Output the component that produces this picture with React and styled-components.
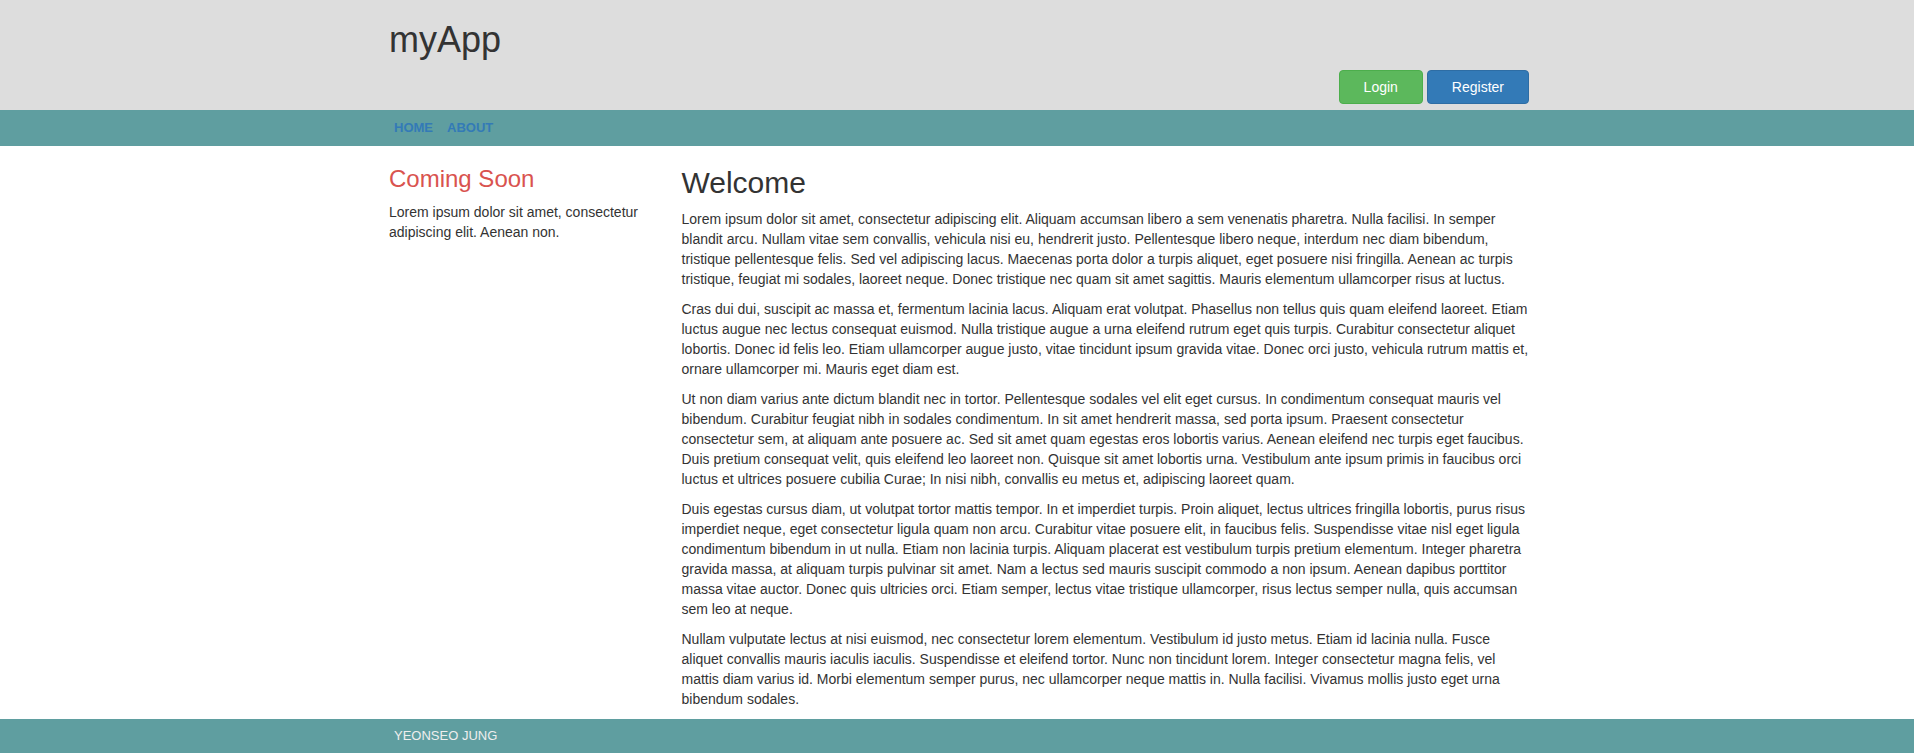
import React from "react";
import styled, { createGlobalStyle } from "styled-components";

const paragraphs = [
  "Lorem ipsum dolor sit amet, consectetur adipiscing elit. Aliquam accumsan libero a sem venenatis pharetra. Nulla facilisi. In semper blandit arcu. Nullam vitae sem convallis, vehicula nisi eu, hendrerit justo. Pellentesque libero neque, interdum nec diam bibendum, tristique pellentesque felis. Sed vel adipiscing lacus. Maecenas porta dolor a turpis aliquet, eget posuere nisi fringilla. Aenean ac turpis tristique, feugiat mi sodales, laoreet neque. Donec tristique nec quam sit amet sagittis. Mauris elementum ullamcorper risus at luctus.",
  "Cras dui dui, suscipit ac massa et, fermentum lacinia lacus. Aliquam erat volutpat. Phasellus non tellus quis quam eleifend laoreet. Etiam luctus augue nec lectus consequat euismod. Nulla tristique augue a urna eleifend rutrum eget quis turpis. Curabitur consectetur aliquet lobortis. Donec id felis leo. Etiam ullamcorper augue justo, vitae tincidunt ipsum gravida vitae. Donec orci justo, vehicula rutrum mattis et, ornare ullamcorper mi. Mauris eget diam est.",
  "Ut non diam varius ante dictum blandit nec in tortor. Pellentesque sodales vel elit eget cursus. In condimentum consequat mauris vel bibendum. Curabitur feugiat nibh in sodales condimentum. In sit amet hendrerit massa, sed porta ipsum. Praesent consectetur consectetur sem, at aliquam ante posuere ac. Sed sit amet quam egestas eros lobortis varius. Aenean eleifend nec turpis eget faucibus. Duis pretium consequat velit, quis eleifend leo laoreet non. Quisque sit amet lobortis urna. Vestibulum ante ipsum primis in faucibus orci luctus et ultrices posuere cubilia Curae; In nisi nibh, convallis eu metus et, adipiscing laoreet quam.",
  "Duis egestas cursus diam, ut volutpat tortor mattis tempor. In et imperdiet turpis. Proin aliquet, lectus ultrices fringilla lobortis, purus risus imperdiet neque, eget consectetur ligula quam non arcu. Curabitur vitae posuere elit, in faucibus felis. Suspendisse vitae nisl eget ligula condimentum bibendum in ut nulla. Etiam non lacinia turpis. Aliquam placerat est vestibulum turpis pretium elementum. Integer pharetra gravida massa, at aliquam turpis pulvinar sit amet. Nam a lectus sed mauris suscipit commodo a non ipsum. Aenean dapibus porttitor massa vitae auctor. Donec quis ultricies orci. Etiam semper, lectus vitae tristique ullamcorper, risus lectus semper nulla, quis accumsan sem leo at neque.",
  "Nullam vulputate lectus at nisi euismod, nec consectetur lorem elementum. Vestibulum id justo metus. Etiam id lacinia nulla. Fusce aliquet convallis mauris iaculis iaculis. Suspendisse et eleifend tortor. Nunc non tincidunt lorem. Integer consectetur magna felis, vel mattis diam varius id. Morbi elementum semper purus, nec ullamcorper neque mattis in. Nulla facilisi. Vivamus mollis justo eget urna bibendum sodales.",
];

const navLinks = ["HOME", "ABOUT"];

const App = () => {
  return (
    <>
      <GlobalStyle />
      <Header>
        <Container>
          <Brand>myApp</Brand>
          <ButtonRow>
            <Button variant="success">Login</Button>
            <Button variant="primary">Register</Button>
          </ButtonRow>
        </Container>
      </Header>
      <NavBar>
        <Container>
          <NavList>
            {navLinks.map((link) => (
              <NavLink key={link} href="#">
                {link}
              </NavLink>
            ))}
          </NavList>
        </Container>
      </NavBar>
      <Container>
        <Row>
          <aside>
            <SideTitle>Coming Soon</SideTitle>
            <Text>Lorem ipsum dolor sit amet, consectetur adipiscing elit. Aenean non.</Text>
          </aside>
          <main>
            <MainTitle>Welcome</MainTitle>
            {paragraphs.map((p, i) => (
              <Text key={i}>{p}</Text>
            ))}
          </main>
        </Row>
      </Container>
      <Footer>
        <Container>
          <FooterText>YEONSEO JUNG</FooterText>
        </Container>
      </Footer>
    </>
  );
};

export default App;

// Styled Components
const GlobalStyle = createGlobalStyle`
  * {
    box-sizing: border-box;
  }
  body {
    margin: 0;
    font-family: "Liberation Sans", Arial, sans-serif;
    font-size: 14px;
    line-height: 20px;
    color: #333;
    background: #fff;
  }
`;

const Container = styled.div`
  width: 1170px;
  margin-left: calc(50% - 583px);
  padding: 0 15px;
`;

const Header = styled.header`
  background-color: #dddddd;
  padding: 20px 0 6px;
`;

const Brand = styled.h1`
  margin: 0 0 10px;
  font-size: 36px;
  font-weight: 500;
  line-height: 40px;
  color: #333;
`;

const ButtonRow = styled.div`
  display: flex;
  justify-content: flex-end;
  gap: 4px;
`;

const Button = styled.button`
  height: 34px;
  padding: 6px 24px;
  font-family: inherit;
  font-size: 14px;
  line-height: 20px;
  color: #fff;
  border-radius: 4px;
  border: 1px solid
    ${(p) => (p.variant === "success" ? "#4cae4c" : "#2e6da4")};
  background-color: ${(p) =>
    p.variant === "success" ? "#5cb85c" : "#337ab7"};
  cursor: pointer;
`;

const NavBar = styled.nav`
  background-color: #5f9ea0;
  height: 36px;
`;

const NavList = styled.div`
  display: flex;
  height: 36px;
  align-items: center;
  gap: 14px;
  padding-left: 5px;
`;

const NavLink = styled.a`
  font-size: 13px;
  font-weight: 600;
  color: #337ab7;
  text-decoration: none;
`;

const Row = styled.div`
  display: grid;
  grid-template-columns: 262.5px 1fr;
  column-gap: 30px;
`;

const SideTitle = styled.h3`
  margin: 20px 0 10px;
  font-size: 24px;
  font-weight: 500;
  line-height: 26.4px;
  color: #d9534f;
`;

const MainTitle = styled.h2`
  margin: 20px 0 10px;
  font-size: 30px;
  font-weight: 500;
  line-height: 33px;
  color: #333;
`;

const Text = styled.p`
  margin: 0 0 10px;
`;

const Footer = styled.footer`
  background-color: #5f9ea0;
  padding: 10px 0;
`;

const FooterText = styled.div`
  padding-left: 5px;
  font-size: 13px;
  line-height: 14px;
  color: #eeeeee;
`;
